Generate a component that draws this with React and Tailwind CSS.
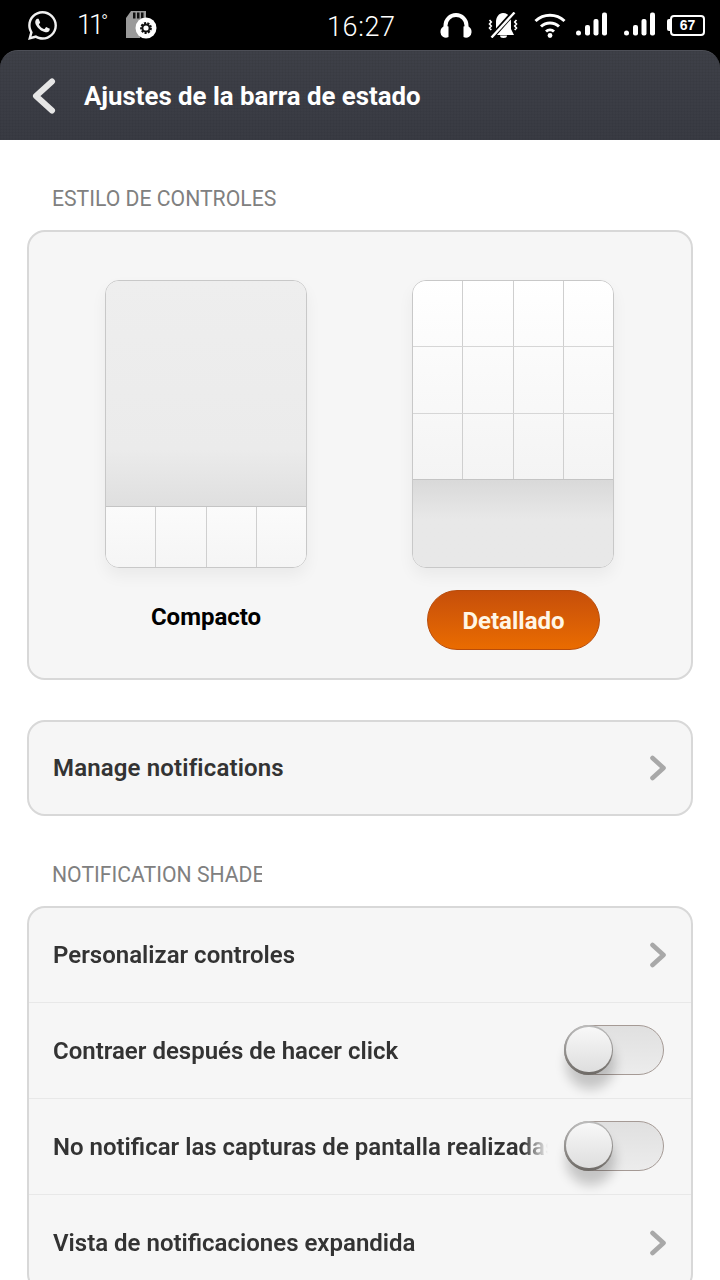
import { FaWhatsapp } from "react-icons/fa";

function Signal() {
  return (
    <svg width="31" height="26" viewBox="0 0 31 26" className="shrink-0">
      <rect x="0" y="18.5" width="5" height="5" rx="2.5" fill="#fff" />
      <rect x="9" y="13" width="5" height="10.5" rx="2" fill="#fff" />
      <rect x="17.5" y="7" width="5" height="16.5" rx="2" fill="#fff" />
      <rect x="26" y="0.5" width="5" height="23" rx="2" fill="#fff" />
    </svg>
  );
}

function StatusBar() {
  return (
    <div className="h-[50px] bg-black flex items-center text-white shrink-0">
      <div className="flex items-center w-[315px] pl-[26px]">
        <FaWhatsapp className="w-[33px] h-[33px] text-[#f0f0f0]" />
        <span className="ml-[18px] text-[27px] leading-none font-light tracking-[-3px] pt-[1px]">
          11<span className="text-[19px] align-top">°</span>
        </span>
        {/* sd card with gear */}
        <svg width="32" height="30" viewBox="0 0 32 30" className="ml-[20px]">
          <path d="M6 1h15v13l-6 14H1V8z" fill="#9a9a9a" />
          <rect x="8" y="2.5" width="2.5" height="6" fill="#111" />
          <rect x="12" y="2.5" width="2.5" height="6" fill="#111" />
          <rect x="16" y="2.5" width="2.5" height="6" fill="#111" />
          <circle cx="21" cy="18" r="10.5" fill="#fff" />
          <circle cx="21" cy="18" r="4.6" fill="none" stroke="#111" strokeWidth="2.6" strokeDasharray="2 1.2" />
          <circle cx="21" cy="18" r="3.6" fill="none" stroke="#111" strokeWidth="2" />
        </svg>
      </div>
      <span className="text-[27px] leading-none font-light tracking-[0.6px] w-[112px] ml-[12px] pt-[5px]">16:27</span>
      <div className="flex items-center ml-[1px]">
        <svg width="32" height="26" viewBox="0 0 32 26">
          <path d="M5.500 18V13.500a10.500 10.500 0 0 1 21 0V18" fill="none" stroke="#fff" strokeWidth="4" />
          <path d="M0.500 19.500a5.500 5.500 0 0 1 8-5v10.500a5.500 5.500 0 0 1-8-5.500z M31.500 19.500a5.500 5.500 0 0 0-8-5v10.500a5.500 5.500 0 0 0 8-5.500z" fill="#fff" />
        </svg>
        <svg width="32" height="26" viewBox="0 0 32 26" className="ml-[15px]">
          <path d="M16 1c5 0 8 4 8 9v7l3 6H6l3-6v-7c0-5 3-9 7-9z" fill="#fff" />
          <path d="M13 23.500a3.500 2.500 0 0 0 7 0z" fill="#fff" />
          <path d="M2.500 8l1.800 2-1.800 2 1.800 2-1.800 2 1.800 2M29.500 8l-1.800 2 1.800 2-1.800 2 1.800 2-1.800 2" fill="none" stroke="#fff" strokeWidth="1.600" />
          <path d="M3 27L28 -1" stroke="#000" strokeWidth="5" />
          <path d="M4.500 25.500L27.500 0.500" stroke="#fff" strokeWidth="2.400" />
        </svg>
        <svg width="32" height="26" viewBox="0 0 32 26" className="ml-[15px]">
          <path d="M1.500 9a21 21 0 0 1 29 0" fill="none" stroke="#fff" strokeWidth="3" />
          <path d="M7 14.500a13 13 0 0 1 18 0" fill="none" stroke="#fff" strokeWidth="3" />
          <path d="M12 19.500a6 6 0 0 1 8 0" fill="none" stroke="#fff" strokeWidth="3" />
          <circle cx="16" cy="23.500" r="2.400" fill="#fff" />
        </svg>
        <div className="ml-[10px]">
          <Signal />
        </div>
        <div className="ml-[17px]">
          <Signal />
        </div>
        <div className="ml-[12px] flex items-center">
          <div className="w-[3px] h-[12px] bg-white rounded-l-[2px]" />
          <div className="w-[35px] h-[21px] border-[2.5px] border-white rounded-[4px] flex items-center justify-center text-[14px] font-bold leading-none font-['Liberation_Sans',sans-serif]">
            67
          </div>
        </div>
      </div>
    </div>
  );
}

function Header() {
  return (
    <div className="h-[90px] shrink-0 bg-black">
      <div className="h-full rounded-t-[18px] border-t border-[#4d4f57] bg-[linear-gradient(rgba(0,0,0,0.035)_1px,transparent_1px),linear-gradient(90deg,rgba(0,0,0,0.035)_1px,transparent_1px),linear-gradient(#3e4048,#393b43)] bg-[size:3px_3px,3px_3px,100%_100%] flex items-center pl-[31px] pt-[1px]">
        <svg width="26" height="36" viewBox="0 0 26 36">
          <path d="M21 3.500L5 18l16 14.500" fill="none" stroke="#e6e6e6" strokeWidth="6" strokeLinecap="round" strokeLinejoin="round" />
        </svg>
        <h1 className="ml-[27px] text-[25.800px] font-bold text-white">Ajustes de la barra de estado</h1>
      </div>
    </div>
  );
}

function SectionLabel({ children, className = "" }) {
  return (
    <div className={`shrink-0 pl-[25px] text-[21.200px] leading-[24px] text-[#808080] overflow-hidden whitespace-nowrap ${className}`}>
      {children}
    </div>
  );
}

function Chevron() {
  return (
    <svg width="18" height="26" viewBox="0 0 18 26" className="shrink-0">
      <path d="M3.500 3l11 10-11 10" fill="none" stroke="#a8a8a8" strokeWidth="4.600" strokeLinecap="round" strokeLinejoin="round" />
    </svg>
  );
}

function Toggle() {
  return (
    <div className="relative w-[100px] h-[50px] mb-[2px] shrink-0 rounded-full border border-[#a59a95] bg-gradient-to-b from-[#e0e0e0] to-[#ececec]">
      <div className="absolute left-[-1px] top-[-1px] w-[49px] h-[50px] rounded-full bg-gradient-to-b from-[#bdbdbd] to-[#6e6a66] shadow-[2px_14px_12px_rgba(0,0,0,0.2)]" />
      <div className="absolute left-[1px] top-[1px] w-[46px] h-[45px] rounded-full bg-gradient-to-b from-[#f8f8f8] to-[#dedede]" />
    </div>
  );
}

function Row({ label, border, first, children }) {
  return (
    <div className={`flex items-center pl-[24px] ${first ? "h-[94px]" : "h-[96px]"} ${border ? "border-t border-[#e8e8e8]" : ""}`}>
      <span className="w-[495px] shrink-0 text-[24px] font-semibold text-[#333333] whitespace-nowrap overflow-hidden [mask-image:linear-gradient(to_right,black_95%,transparent)]">
        {label}
      </span>
      <div className="flex-1 flex justify-end pr-[27px]">{children}</div>
    </div>
  );
}

function Preview({ compact }) {
  const cell = "border-r last:border-r-0 border-[#cfcfcf] flex-1";
  return (
    <div className="w-[202px] h-[288px] rounded-[14px] border border-[#c8c8c8] overflow-hidden flex flex-col shadow-[0_8px_16px_rgba(0,0,0,0.05)]">
      {compact ? (
        <>
          <div className="h-[226px] bg-gradient-to-b from-[#eeeeee] via-[#ebebeb] via-75% to-[#dfdfdf] border-b border-[#c4c4c4]" />
          <div className="flex-1 flex bg-gradient-to-b from-[#fbfbfb] to-[#f5f5f5]">
            <div className={cell} />
            <div className={cell} />
            <div className={cell} />
            <div className={cell} />
          </div>
        </>
      ) : (
        <>
          <div className="h-[199px] bg-gradient-to-b from-white to-[#f4f4f4] border-b border-[#c4c4c4] flex flex-col">
            {[0, 1, 2].map((r) => (
              <div key={r} className="flex-1 flex border-b last:border-b-0 border-[#d6d6d6]">
                <div className={cell} />
                <div className={cell} />
                <div className={cell} />
                <div className={cell} />
              </div>
            ))}
          </div>
          <div className="flex-1 bg-gradient-to-b from-[#d9d9d9] via-[#e8e8e8] via-45% to-[#e8e8e8]" />
        </>
      )}
    </div>
  );
}

export default function App() {
  return (
    <div className="w-[720px] h-[1280px] overflow-hidden bg-white flex flex-col font-['Roboto',sans-serif]">
      <StatusBar />
      <Header />

      <SectionLabel className="mt-[47px] ml-[27px] w-[260px]">ESTILO DE CONTROLES</SectionLabel>

      <div className="mx-[27px] mt-[19px] h-[450px] shrink-0 rounded-[18px] border-2 border-[#d8d8d8] bg-[#f6f6f6] flex pt-[48px]">
        <div className="ml-[76px] w-[202px] flex flex-col items-center">
          <Preview compact />
          <div className="mt-[36px] text-[24px] font-bold text-black leading-[27px]">Compacto</div>
        </div>
        <div className="ml-[105px] w-[202px] flex flex-col items-center">
          <Preview />
          <button className="mt-[22px] ml-[1px] w-[173px] h-[60px] pt-[1px] rounded-full border border-[#b84c0b] bg-gradient-to-b from-[#c64f0a] to-[#ea6c00] text-[24px] font-bold text-[#fff6e6]">
            Detallado
          </button>
        </div>
      </div>

      <div className="mx-[27px] mt-[40px] h-[96px] shrink-0 rounded-[18px] border-2 border-[#d8d8d8] bg-[#f6f6f6] flex items-center justify-between pl-[24px] pr-[24px]">
        <span className="text-[24px] font-semibold tracking-[0.15px] text-[#333333]">Manage notifications</span>
        <Chevron />
      </div>

      <SectionLabel className="mt-[47px] ml-[27px] w-[235px]">NOTIFICATION SHADE</SectionLabel>

      <div className="mx-[27px] mt-[19px] shrink-0 rounded-[18px] border-2 border-[#d8d8d8] bg-[#f6f6f6]">
        <Row label="Personalizar controles" first>
          <div className="mr-[-3px]">
            <Chevron />
          </div>
        </Row>
        <Row label="Contraer después de hacer click" border>
          <Toggle />
        </Row>
        <Row label="No notificar las capturas de pantalla realizadas" border>
          <Toggle />
        </Row>
        <Row label="Vista de notificaciones expandida" border>
          <div className="mr-[-3px]">
            <Chevron />
          </div>
        </Row>
      </div>
    </div>
  );
}
